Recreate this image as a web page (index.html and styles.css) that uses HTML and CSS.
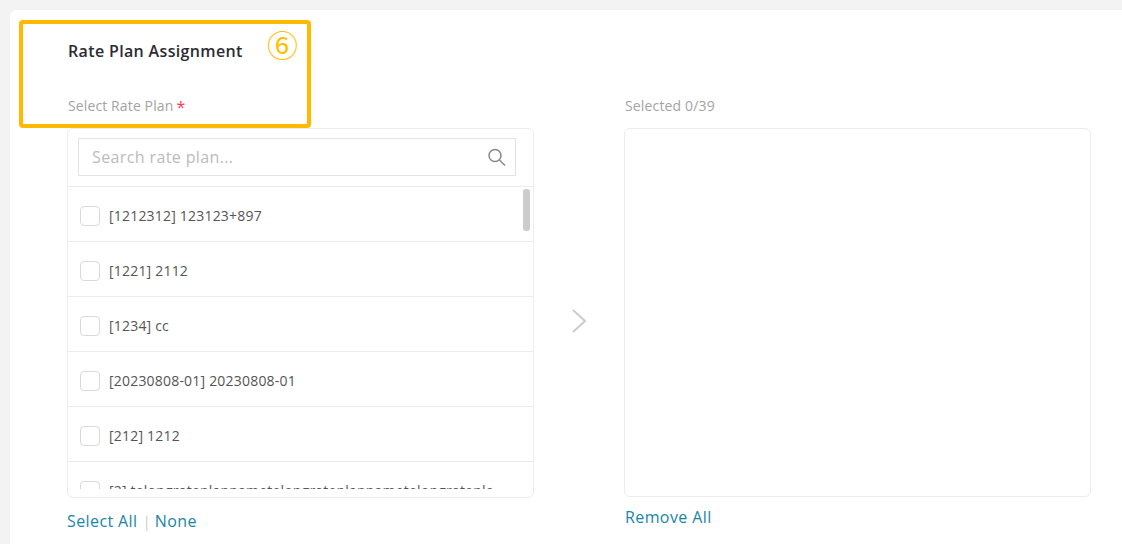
FILE: index.html
```html
<!DOCTYPE html>
<html lang="en">

<head>
	<meta charset="UTF-8">
	<title>Rate Plan Assignment</title>
	<link rel="stylesheet" href="styles.css">
</head>

<body>
	<div class="card">
		<h2 class="title">Rate Plan Assignment</h2>
		<div class="transfer">
			<div class="column">
				<div class="label">Select Rate Plan<span class="required">*</span></div>
				<div class="box">
					<div class="search">
						<div class="search-input">
							<span class="placeholder">Search rate plan...</span>
							<svg class="search-icon" width="20" height="20" viewBox="0 0 20 20" fill="none" stroke="#888" stroke-width="1.5">
								<circle cx="8" cy="8.5" r="6"></circle>
								<path d="M12.5 13l5.5 5.5"></path>
							</svg>
						</div>
					</div>
					<ul class="list">
						<li><span class="check"></span>[1212312] 123123+897</li>
						<li><span class="check"></span>[1221] 2112</li>
						<li><span class="check"></span>[1234] cc</li>
						<li><span class="check"></span>[20230808-01] 20230808-01</li>
						<li><span class="check"></span>[212] 1212</li>
						<li><span class="check"></span>[2] telongrateplannametelongrateplannametelongrateple</li>
					</ul>
					<div class="thumb"></div>
				</div>
				<div class="links links-left"><a>Select All</a><span class="sep">|</span><a>None</a></div>
			</div>
			<div class="arrow">
				<svg width="16" height="26" viewBox="0 0 16 26" fill="none" stroke="#ccc" stroke-width="2">
					<path d="M2 2l12 11L2 24"></path>
				</svg>
			</div>
			<div class="column">
				<div class="label label-right">Selected 0/39</div>
				<div class="box box-right"></div>
				<div class="links links-right"><a>Remove All</a></div>
			</div>
		</div>
	</div>

	<!-- annotation on top of the screenshot -->
	<div class="note">
		<span class="note-num">⑥</span>
	</div>
</body>

</html>
```

FILE: styles.css
```css
body,
h2,
ul,
li {
	margin: 0;
	padding: 0;
}

ul {
	list-style-type: none;
}

body {
	height: 544px;
	overflow: hidden;
	padding: 10px 0 0 10px;
	box-sizing: border-box;
	background: #f3f3f3;
	font: 14px/20px "Open Sans", "Noto Sans", sans-serif;
	color: #555;
}

.card {
	height: 534px;
	padding: 30px 31px 0 57px;
	box-sizing: border-box;
	background: #fff;
	border-radius: 6px 0 0 0;
}

.title {
	padding-left: 1px;
	font-size: 16px;
	line-height: 22px;
	font-weight: 600;
	letter-spacing: 0.35px;
	color: #2b2b33;
}

.transfer {
	display: flex;
	margin-top: 33px;
}

.column {
	width: 467px;
	flex: none;
}

.label {
	height: 20px;
	margin-bottom: 13px;
	padding: 1px 0 0 1px;
	box-sizing: border-box;
	font-size: 14px;
	letter-spacing: 0.12px;
	color: #a3a3a3;
}

.label-right {
	letter-spacing: 0.15px;
}

.required {
	display: inline-block;
	margin-left: 3px;
	font-size: 16px;
	line-height: 16px;
	vertical-align: -2px;
	color: #ff3b50;
}

.box {
	position: relative;
	height: 370px;
	box-sizing: border-box;
	border: 1px solid #ececec;
	border-radius: 6px;
	padding-bottom: 8px;
}

.box-right {
	height: 369px;
	padding: 0;
}

.search {
	padding: 9px 17px 10px 10px;
	border-bottom: 1px solid #ececec;
}

.search-input {
	display: flex;
	align-items: center;
	justify-content: space-between;
	height: 38px;
	padding: 0 8px 0 13px;
	box-sizing: border-box;
	border: 1px solid #e3e3e3;
}

.placeholder {
	font-size: 16px;
	letter-spacing: 0.38px;
	color: #bbb;
}

.search-icon {
	display: block;
}

.list {
	height: 302px;
	overflow: hidden;
}

.list li {
	display: flex;
	align-items: center;
	height: 55px;
	padding: 3px 0 0 12px;
	box-sizing: border-box;
	border-bottom: 1px solid #ececec;
	font-size: 14px;
	letter-spacing: 0.2px;
	white-space: nowrap;
}

.check {
	width: 20px;
	height: 20px;
	margin-right: 9px;
	box-sizing: border-box;
	border: 1px solid #d9d9d9;
	border-radius: 4px;
	flex: none;
}

.thumb {
	position: absolute;
	top: 60px;
	right: 3px;
	width: 7px;
	height: 42px;
	border-radius: 3px;
	background: #ccc;
}

.links {
	margin-top: 9px;
	font-size: 16px;
	line-height: 22px;
	letter-spacing: 0.4px;
	color: #1a85a8;
}

.links-left {
	margin-top: 12px;
}

.links-right {
	padding-left: 1px;
}

.sep {
	margin: 0 4px 0 5px;
	font-size: 15px;
	letter-spacing: 0;
	color: #ccc;
}

.arrow {
	display: flex;
	align-items: center;
	justify-content: center;
	width: 90px;
	flex: none;
	padding-top: 15px;
}

.note {
	position: absolute;
	left: 19px;
	top: 20px;
	width: 292px;
	height: 108px;
	box-sizing: border-box;
	border: 4px solid #ffb900;
	border-radius: 4px;
}

.note-num {
	position: absolute;
	top: 2px;
	right: 9px;
	font: 31px/36px "Noto Sans CJK SC", sans-serif;
	color: #ffc000;
}
```
